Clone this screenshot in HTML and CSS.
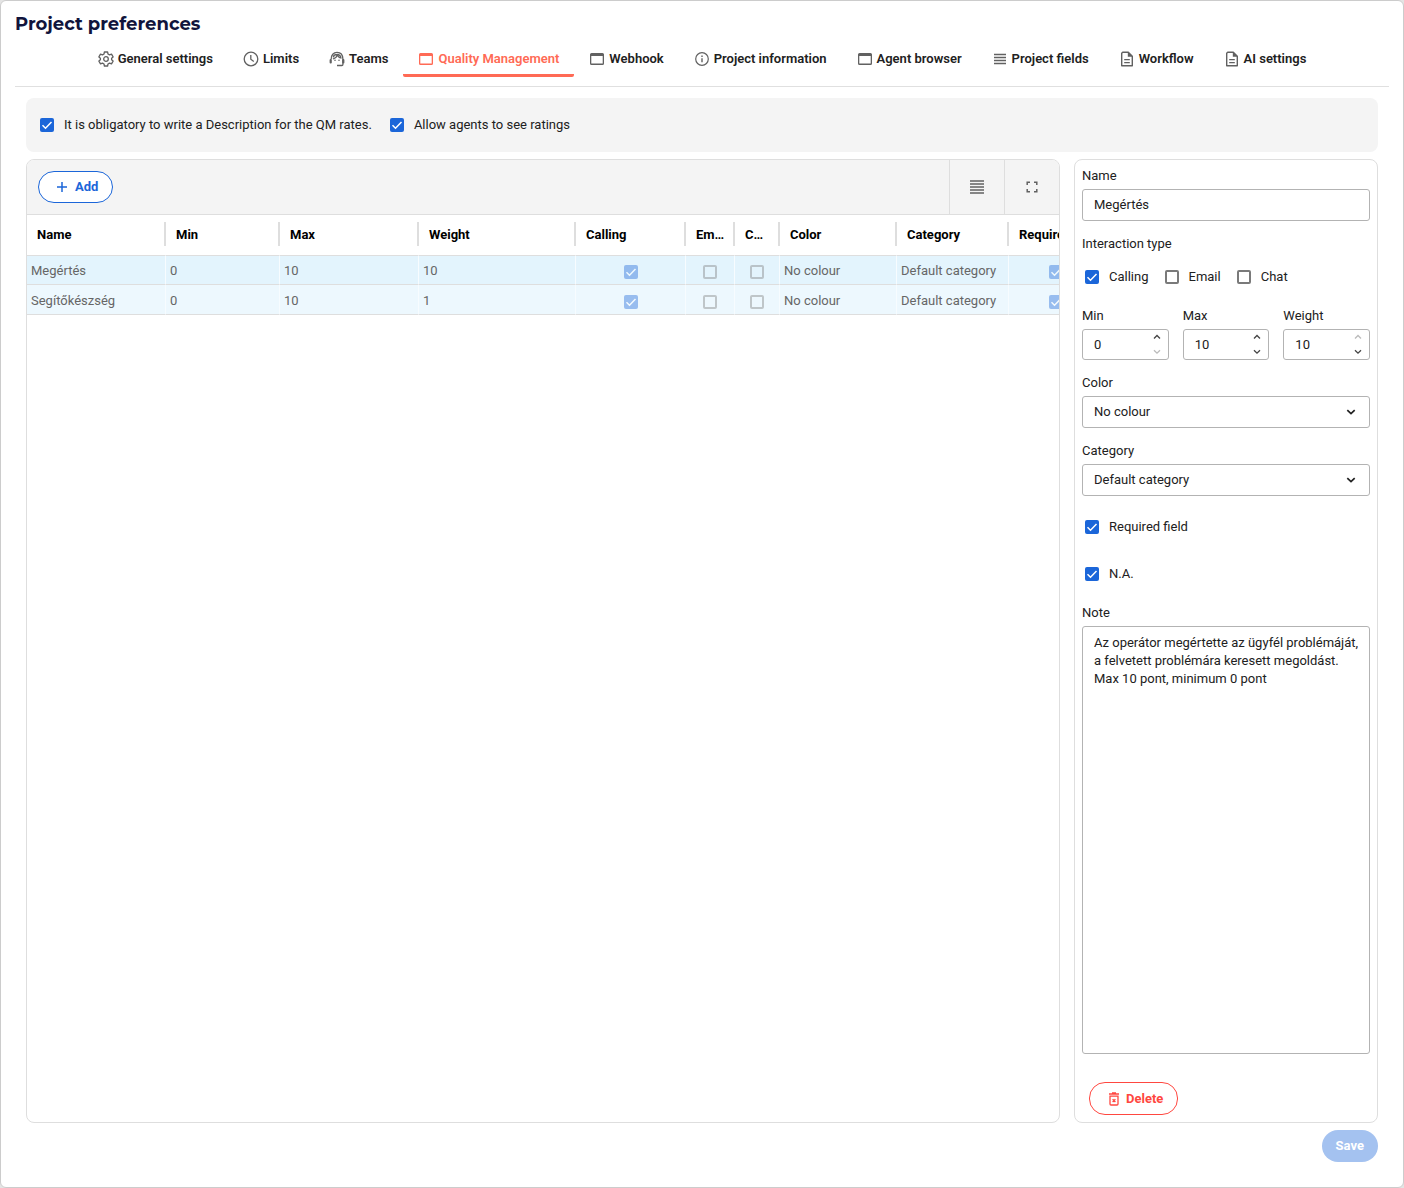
FILE: index.html
```html
<!DOCTYPE html>
<html lang="en">
<head>
<meta charset="utf-8">
<title>Project preferences</title>
<meta name="viewport" content="width=device-width, initial-scale=1">
<link rel="stylesheet" href="styles.css">
</head>
<body>
<svg class="sprite" aria-hidden="true">
  <symbol id="i-gear" viewBox="0 0 16 16"><g fill="none" stroke="currentColor" stroke-width="1.3" stroke-linejoin="round"><path d="M6.4 1h3.2l.4 2 1.5.9 2-.7 1.6 2.7L13.6 7.200v1.600l1.500 1.300-1.600 2.700-2-.7-1.500.9-.4 2H6.400l-.4-2-1.500-.9-2 .7L.9 10.100l1.500-1.300V7.200L.9 5.900l1.600-2.700 2 .7L6 3z"/><circle cx="8" cy="8" r="2.300"/></g></symbol>
  <symbol id="i-clock" viewBox="0 0 16 16"><g fill="none" stroke="currentColor" stroke-width="1.300"><circle cx="8" cy="8" r="6.800"/><path d="M7.800 4v4.200l3 2.200"/></g></symbol>
  <symbol id="i-agent" viewBox="0 0 16 16"><g fill="none" stroke="currentColor" stroke-width="1.300"><path d="M2.200 8.300C2 4 4.600 1.400 8 1.400s5.800 2.600 5.900 6.700v5.400c0 .6-.4 1-1 1H8"/><path d="M3.900 8C7 7 8 5.600 8.300 4.200 9.300 6 10.600 7 12.300 7M4.200 6.300C4.600 4.500 6 3.500 8 3.500s3.800 1.500 4 4"/></g><rect x=".6" y="8" width="2.200" height="4.600" rx="1" fill="currentColor"/><rect x="13.200" y="8" width="2.200" height="4.600" rx="1" fill="currentColor"/><circle cx="6" cy="9.200" r=".8" fill="currentColor"/><circle cx="10" cy="9.200" r=".8" fill="currentColor"/></symbol>
  <symbol id="i-window" viewBox="0 0 16 16"><path fill="currentColor" fill-rule="evenodd" d="M2.500 2h11A1.500 1.500 0 0 1 15 3.500v9a1.500 1.500 0 0 1-1.500 1.500h-11A1.500 1.500 0 0 1 1 12.500v-9A1.500 1.500 0 0 1 2.500 2zM2.300 5v7.600h11.400V5z"/></symbol>
  <symbol id="i-info" viewBox="0 0 16 16"><circle cx="8" cy="8" r="6.300" fill="none" stroke="currentColor" stroke-width="1.200"/><path d="M7.300 7.200h1.400v4H7.300zM7.300 4.600h1.400V6H7.300z" fill="currentColor"/></symbol>
  <symbol id="i-lines" viewBox="0 0 16 16"><path d="M2 3.500h12M2 6.500h12M2 9.500h12M2 12.500h12" stroke="currentColor" stroke-width="1.300"/></symbol>
  <symbol id="i-doc" viewBox="0 0 16 16"><path fill="none" stroke="currentColor" stroke-width="1.400" stroke-linejoin="round" d="M3.700 1.200h5.600l4 4v9.600H2.700V2.200z"/><path fill="currentColor" d="M8.800 1v4.700h4.800z"/><path d="M5.200 8.700h5.600M5.200 11.700h5.600" stroke="currentColor" stroke-width="1.300"/></symbol>
  <symbol id="i-chevron" viewBox="0 0 10 10"><path d="M1.300 3.200 5 6.700l3.700-3.500" fill="none" stroke="currentColor" stroke-width="1.700"/></symbol>
  <symbol id="i-down" viewBox="0 0 8 6"><path d="M1 1.200 4 4.200l3-3" fill="none" stroke="currentColor" stroke-width="1.300"/></symbol>
  <symbol id="i-up" viewBox="0 0 8 6"><path d="M1 4.500 4 1.500l3 3" fill="none" stroke="currentColor" stroke-width="1.300"/></symbol>
</svg>

<main class="dialog">
  <h1 class="title">Project preferences</h1>
  <nav class="tabs" aria-label="Preference sections">
    <a class="tab" href="#general"><svg class="icon"><use href="#i-gear"/></svg>General settings</a>
    <a class="tab" href="#limits"><svg class="icon"><use href="#i-clock"/></svg>Limits</a>
    <a class="tab" href="#teams"><svg class="icon"><use href="#i-agent"/></svg>Teams</a>
    <a class="tab tab-active" href="#quality" aria-current="page"><svg class="icon"><use href="#i-window"/></svg>Quality Management</a>
    <a class="tab" href="#webhook"><svg class="icon"><use href="#i-window"/></svg>Webhook</a>
    <a class="tab" href="#information"><svg class="icon"><use href="#i-info"/></svg>Project information</a>
    <a class="tab" href="#browser"><svg class="icon"><use href="#i-window"/></svg>Agent browser</a>
    <a class="tab" href="#fields"><svg class="icon"><use href="#i-lines"/></svg>Project fields</a>
    <a class="tab" href="#workflow"><svg class="icon"><use href="#i-doc"/></svg>Workflow</a>
    <a class="tab" href="#ai"><svg class="icon"><use href="#i-doc"/></svg>AI settings</a>
  </nav>

  <div class="content">
    <section class="options">
      <label class="check"><input type="checkbox" checked>It is obligatory to write a Description for the QM rates.</label>
      <label class="check"><input type="checkbox" checked>Allow agents to see ratings</label>
    </section>

    <div class="columns">
      <section class="grid">
        <div class="toolbar">
          <button class="pill pill-add" type="button"><svg class="plus" viewBox="0 0 12 12"><path d="M6 1v10M1 6h10" stroke="currentColor" stroke-width="1.500"/></svg>Add</button>
          <div class="tools">
            <button class="tool" type="button" aria-label="Row density"><svg class="icon" viewBox="0 0 16 16"><path d="M1 2h14M1 5h14M1 8h14M1 11h14M1 14h14" stroke="currentColor" stroke-width="1.500"/></svg></button>
            <button class="tool" type="button" aria-label="Full screen"><svg class="icon" viewBox="0 0 16 16"><path d="M3.200 6V3.200H6M10 3.200h2.800V6M12.800 10v2.800H10M6 12.800H3.200V10" fill="none" stroke="currentColor" stroke-width="1.500"/></svg></button>
          </div>
        </div>
        <div class="table-wrap">
          <table class="table">
            <colgroup><col class="c-name"><col class="c-min"><col class="c-max"><col class="c-weight"><col class="c-call"><col class="c-mail"><col class="c-chat"><col class="c-color"><col class="c-cat"><col class="c-req"></colgroup>
            <thead>
              <tr><th><span>Name</span></th><th><span>Min</span></th><th><span>Max</span></th><th><span>Weight</span></th><th><span>Calling</span></th><th><span>Email</span></th><th><span>Chat</span></th><th><span>Color</span></th><th><span>Category</span></th><th><span>Required</span></th></tr>
            </thead>
            <tbody>
              <tr class="selected"><td>Megértés</td><td>0</td><td>10</td><td>10</td><td class="mark"><input type="checkbox" aria-label="Calling" checked disabled></td><td class="mark"><input type="checkbox" aria-label="Email" disabled></td><td class="mark"><input type="checkbox" aria-label="Chat" disabled></td><td>No colour</td><td>Default category</td><td class="mark"><input type="checkbox" aria-label="Required" checked disabled></td></tr>
              <tr><td>Segítőkészség</td><td>0</td><td>10</td><td>1</td><td class="mark"><input type="checkbox" aria-label="Calling" checked disabled></td><td class="mark"><input type="checkbox" aria-label="Email" disabled></td><td class="mark"><input type="checkbox" aria-label="Chat" disabled></td><td>No colour</td><td>Default category</td><td class="mark"><input type="checkbox" aria-label="Required" checked disabled></td></tr>
            </tbody>
          </table>
        </div>
      </section>

      <form class="editor">
        <div class="field">
          <label for="name">Name</label>
          <input class="box" id="name" type="text" value="Megértés">
        </div>
        <fieldset class="types">
          <legend>Interaction type</legend>
          <div class="checks">
            <label class="check"><input type="checkbox" checked>Calling</label>
            <label class="check"><input type="checkbox">Email</label>
            <label class="check"><input type="checkbox">Chat</label>
          </div>
        </fieldset>
        <div class="numbers">
          <div class="field">
            <label for="min">Min</label>
            <div class="box number"><input id="min" type="number" value="0"><span class="spin"><button type="button" aria-label="Increase min"><svg><use href="#i-up"/></svg></button><button type="button" aria-label="Decrease min" disabled><svg><use href="#i-down"/></svg></button></span></div>
          </div>
          <div class="field">
            <label for="max">Max</label>
            <div class="box number"><input id="max" type="number" value="10"><span class="spin"><button type="button" aria-label="Increase max"><svg><use href="#i-up"/></svg></button><button type="button" aria-label="Decrease max"><svg><use href="#i-down"/></svg></button></span></div>
          </div>
          <div class="field">
            <label for="weight">Weight</label>
            <div class="box number"><input id="weight" type="number" value="10"><span class="spin"><button type="button" aria-label="Increase weight" disabled><svg><use href="#i-up"/></svg></button><button type="button" aria-label="Decrease weight"><svg><use href="#i-down"/></svg></button></span></div>
          </div>
        </div>
        <div class="field">
          <label for="color">Color</label>
          <div class="select"><select class="box" id="color"><option>No colour</option></select><svg class="chevron"><use href="#i-chevron"/></svg></div>
        </div>
        <div class="field">
          <label for="category">Category</label>
          <div class="select"><select class="box" id="category"><option>Default category</option></select><svg class="chevron"><use href="#i-chevron"/></svg></div>
        </div>
        <div class="flags">
          <label class="check"><input type="checkbox" checked>Required field</label>
          <label class="check"><input type="checkbox" checked>N.A.</label>
        </div>
        <div class="field note">
          <label for="note">Note</label>
          <textarea class="box" id="note">Az operátor megértette az ügyfél problémáját, a felvetett problémára keresett megoldást.
Max 10 pont, minimum 0 pont</textarea>
        </div>
        <button class="pill pill-delete" type="button"><svg class="trash" viewBox="0 0 12 14"><path d="M1 2h10M4 1h4M2 4.200h8V12q0 1-1 1H3q-1 0-1-1zM4.600 7.200l2.800 2.800M7.400 7.200 4.600 10" fill="none" stroke="currentColor" stroke-width="1.300"/></svg>Delete</button>
      </form>
    </div>

    <footer class="footer"><button class="save" type="submit" disabled>Save</button></footer>
  </div>
</main>
</body>
</html>
```

FILE: styles.css
```css
*, *::before, *::after { box-sizing: border-box; }

body {
  margin: 0;
  background: #e4e4e4;
  color: #212121;
  font: 13px/18px Roboto, "Liberation Sans", sans-serif;
}

button, input, select, textarea { font: inherit; color: inherit; }
button { background: none; border: 0; padding: 0; cursor: pointer; }

.sprite { display: none; }

.dialog {
  display: flex;
  flex-direction: column;
  min-height: 100vh;
  padding: 10px 14px 25px;
  background: #fff;
  border: 1px solid #ccc;
  border-radius: 6px;
}

.title {
  margin: 0;
  color: #11143c;
  font: 700 18px/26px Montserrat, Inter, sans-serif;
}

/* Tabs */
.tabs {
  display: flex;
  justify-content: center;
  padding: 4px 0 9px;
  border-bottom: 1px solid #e0e0e0;
}

.tab {
  display: flex;
  align-items: center;
  gap: 4px;
  height: 36px;
  padding: 3px 15px 0;
  border-bottom: 3px solid transparent;
  border-radius: 2px;
  color: #212121;
  font-weight: 600;
  text-decoration: none;
  white-space: nowrap;
}

.tab-active { color: #ff6a55; border-bottom-color: #ff6a55; }

.icon { width: 16px; height: 16px; color: #616161; flex: none; }
.tab-active .icon { color: inherit; }

.content {
  flex: 1;
  display: flex;
  flex-direction: column;
  gap: 7px;
  padding: 11px 11px 0;
}

/* Checkboxes */
input[type="checkbox"] {
  appearance: none;
  flex: none;
  width: 14px;
  height: 14px;
  margin: 0;
  border: 2px solid #7a7a7a;
  border-radius: 2px;
}

input[type="checkbox"]:checked {
  border: 0;
  background: #1b66d9 url("data:image/svg+xml,%3Csvg xmlns='http://www.w3.org/2000/svg' viewBox='0 0 14 14'%3E%3Cpath d='M2.500 7.300l3 3 6-6.300' fill='none' stroke='white' stroke-width='1.500'/%3E%3C/svg%3E") center / 14px 14px;
}

input[type="checkbox"]:disabled { opacity: .4; }

.check { display: flex; align-items: center; gap: 10px; }

.options {
  display: flex;
  align-items: center;
  gap: 18px;
  height: 54px;
  padding: 0 14px;
  background: #f4f4f4;
  border-radius: 8px;
}

.columns { flex: 1; display: flex; gap: 14px; }

/* Criteria grid */
.grid {
  flex: 1;
  min-width: 0;
  border: 1px solid #dedede;
  border-radius: 8px;
  overflow: hidden;
}

.toolbar {
  display: flex;
  justify-content: space-between;
  align-items: center;
  height: 55px;
  padding-left: 11px;
  background: #f4f4f4;
  border-bottom: 1px solid #dedede;
}

.tools { display: flex; align-self: stretch; }

.tool {
  display: grid;
  place-items: center;
  width: 55px;
  border-left: 1px solid #dedede;
}

.pill {
  display: flex;
  align-items: center;
  height: 32px;
  border: 1px solid currentColor;
  border-radius: 16px;
  background: #fff;
  font-weight: 700;
}

.pill-add { gap: 7px; padding: 0 14px 0 17px; color: #1b66d9; }
.plus { width: 12px; height: 12px; }

.table-wrap { overflow: hidden; }

.table {
  width: 1077px;
  table-layout: fixed;
  border-collapse: separate;
  border-spacing: 0;
}

.c-name, .c-max { width: 139px; }
.c-min { width: 114px; }
.c-weight { width: 157px; }
.c-call { width: 110px; }
.c-mail { width: 49px; }
.c-chat { width: 45px; }
.c-color { width: 117px; }
.c-cat { width: 112px; }

th {
  height: 40px;
  padding: 0 0 2px;
  color: #000;
  font-weight: 700;
  text-align: left;
}

th span {
  display: block;
  height: 24px;
  padding: 0 8px 0 10px;
  border-right: 2px solid #dedede;
  line-height: 26px;
  overflow: hidden;
  text-overflow: ellipsis;
  white-space: nowrap;
}

td {
  height: 30px;
  padding: 2px 4px 0;
  background: #edf8fe;
  border-right: 1px solid #f7fcff;
  border-bottom: 1px solid #dedede;
  color: #666;
  white-space: nowrap;
}

.selected td { padding-top: 1px; background: #e3f4fd; border-top: 1px solid #dedede; }

.mark { text-align: center; }
.mark input { display: block; margin: 2px auto 0; }

/* Editor */
.editor {
  flex: none;
  display: flex;
  flex-direction: column;
  gap: 12px;
  width: 304px;
  padding: 5px 7px 7px;
  border: 1px solid #dedede;
  border-radius: 8px;
}

.field { display: flex; flex-direction: column; gap: 2px; min-width: 0; }
.field > label, legend { padding: 0; line-height: 22px; }

.box {
  width: 100%;
  height: 32px;
  padding: 0 11px;
  border: 1px solid #b3b3b3;
  border-radius: 3px;
  background: #fff;
}

input.box { padding-bottom: 2px; }

.types { min-width: 0; margin: 0; padding: 0; border: 0; }

.checks { display: flex; gap: 16px; padding: 10px 3px 4px; }
.checks .check { height: 24px; }

.numbers { display: grid; grid-template-columns: repeat(3, 1fr); gap: 14px; }
.number { display: flex; height: 31px; padding-right: 6px; }

.number input {
  flex: 1;
  min-width: 0;
  padding: 0;
  border: 0;
  outline: 0;
  background: none;
  appearance: textfield;
}

.number input::-webkit-inner-spin-button { display: none; }

.spin { display: flex; flex-direction: column; justify-content: space-between; }
.spin button { display: grid; place-items: center; width: 10px; height: 14px; color: #444; }
.spin button:disabled { color: #bbb; }
.spin svg { width: 8px; height: 6px; }

.select { display: grid; align-items: center; }
.select > * { grid-area: 1 / 1; }
.select select { appearance: none; }
.chevron { justify-self: end; width: 10px; height: 10px; margin-right: 14px; pointer-events: none; }

.flags { display: flex; flex-direction: column; gap: 23px; padding: 7px 3px 4px; }
.flags .check { height: 24px; }

.note { flex: 1; }
.note textarea { flex: 1; padding: 7px 4px 7px 11px; resize: none; }

.pill-delete {
  align-self: flex-start;
  gap: 6px;
  height: 33px;
  margin: 16px 7px 0;
  padding: 0 14px 0 18px;
  color: #ff4740;
}

.trash { width: 12px; height: 14px; }

.footer { display: flex; justify-content: flex-end; }

.save {
  height: 32px;
  padding: 0 14px;
  border-radius: 16px;
  background: #a4c2f0;
  color: #fff;
  font-weight: 700;
}
```
